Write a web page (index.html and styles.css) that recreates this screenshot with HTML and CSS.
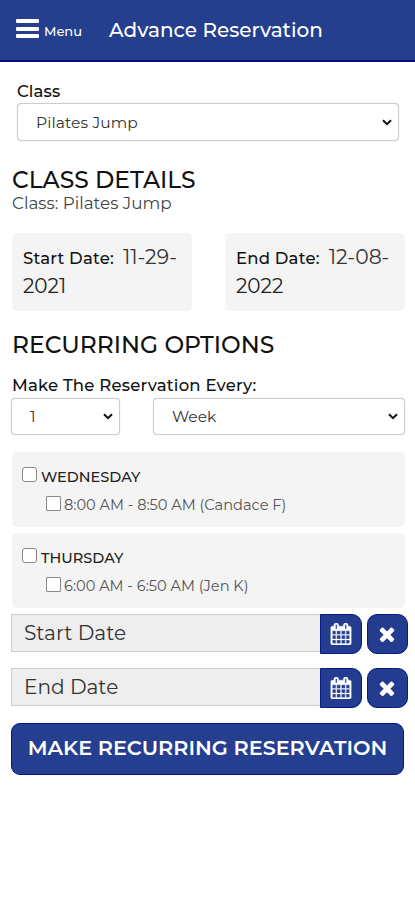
FILE: index.html
```html
<!DOCTYPE html>
<html lang="en">
<head>
<meta charset="utf-8">
<meta name="viewport" content="width=device-width, initial-scale=1">
<title>Advance Reservation</title>
<link rel="stylesheet" href="styles.css">
</head>
<body>
<svg width="0" height="0" class="defs">
  <symbol id="calendar" viewBox="0 0 1792 1792"><path d="M192 1664h288v-288h-288v288zm352 0h320v-288h-320v288zm-352-352h288v-320h-288v320zm352 0h320v-320h-320v320zm-352-384h288v-288h-288v288zm736 736h320v-288h-320v288zm-384-736h320v-288h-320v288zm768 736h288v-288h-288v288zm-384-352h320v-320h-320v320zm-352-864v-288q0-13-9.500-22.500t-22.500-9.500h-64q-13 0-22.500 9.500t-9.500 22.500v288q0 13 9.500 22.500t22.500 9.500h64q13 0 22.500-9.500t9.500-22.500zm736 864h288v-320h-288v320zm-384-384h320v-288h-320v288zm384 0h288v-288h-288v288zm32-480v-288q0-13-9.500-22.500t-22.500-9.500h-64q-13 0-22.500 9.500t-9.500 22.500v288q0 13 9.500 22.500t22.500 9.500h64q13 0 22.500-9.500t9.500-22.500zm384-64v1280q0 52-38 90t-90 38h-1408q-52 0-90-38t-38-90v-1280q0-52 38-90t90-38h128v-96q0-66 47-113t113-47h64q66 0 113 47t47 113v96h384v-96q0-66 47-113t113-47h64q66 0 113 47t47 113v96h128q52 0 90 38t38 90z"/></symbol>
  <symbol id="times" viewBox="0 0 1792 1792"><path d="M1490 1322q0 40-28 68l-136 136q-28 28-68 28t-68-28l-294-294-294 294q-28 28-68 28t-68-28l-136-136q-28-28-28-68t28-68l294-294-294-294q-28-28-28-68t28-68l136-136q28-28 68-28t68 28l294 294 294-294q28-28 68-28t68 28l136 136q28 28 28 68t-28 68l-294 294 294 294q28 28 28 68z"/></symbol>
  <symbol id="chevron" viewBox="0 0 10 7"><path d="M1 1.200l4 4 4-4" fill="none" stroke="#111" stroke-width="2"/></symbol>
</svg>
<header class="topbar">
  <button class="menu"><span class="bars"><i></i><i></i><i></i></span><span class="menu-label">Menu</span></button>
  <h1>Advance Reservation</h1>
</header>
<main>
  <section class="class-field">
    <div class="label class-label">Class</div>
    <div class="select"><span class="class-value">Pilates Jump</span><svg><use href="#chevron"/></svg></div>
  </section>
  <h2 class="details">CLASS DETAILS</h2>
  <p class="class-name">Class: Pilates Jump</p>
  <div class="dates">
    <div class="card date"><div><span class="label">Start Date:</span><span class="value">11-29-</span></div><div class="year">2021</div></div>
    <div class="card date"><div><span class="label">End Date:</span><span class="value">12-08-</span></div><div class="year">2022</div></div>
  </div>
  <h2>RECURRING OPTIONS</h2>
  <div class="label every">Make The Reservation Every:</div>
  <div class="repeat">
    <div class="select"><span>1</span><svg><use href="#chevron"/></svg></div>
    <div class="select"><span>Week</span><svg><use href="#chevron"/></svg></div>
  </div>
  <div class="card day">
    <label class="day-name"><i class="box"></i><span>WEDNESDAY</span></label>
    <label class="slot"><i class="box"></i><span>8:00 AM - 8:50 AM (Candace F)</span></label>
  </div>
  <div class="card day">
    <label class="day-name"><i class="box"></i><span>THURSDAY</span></label>
    <label class="slot"><i class="box"></i><span>6:00 AM - 6:50 AM (Jen K)</span></label>
  </div>
  <div class="picker">
    <div class="input"><span>Start Date</span></div>
    <button class="cal" aria-label="Calendar"><svg><use href="#calendar"/></svg></button>
    <button class="clear" aria-label="Clear"><svg><use href="#times"/></svg></button>
  </div>
  <div class="picker">
    <div class="input"><span>End Date</span></div>
    <button class="cal" aria-label="Calendar"><svg><use href="#calendar"/></svg></button>
    <button class="clear" aria-label="Clear"><svg><use href="#times"/></svg></button>
  </div>
  <button class="submit"><span>MAKE RECURRING RESERVATION</span></button>
</main>
</body>
</html>
```
FILE: styles.css
```css
* { box-sizing: border-box; }
body { margin: 0; background: #fff; color: #222; font-family: Montserrat, Inter, "Open Sans", sans-serif; }
h1, h2, p { margin: 0; }
button { border: 0; padding: 0; font-family: inherit; color: #fff; }
span { white-space: nowrap; }
.defs { display: none; }
.topbar { display: flex; height: 62px; background: #253e8d; border-bottom: 2px solid #060b82; color: #fff; }
.menu { display: flex; width: 109px; padding: 19px 0 0 16px; background: none; }
.bars { display: flex; flex-direction: column; gap: 4px; width: 23px; }
.bars i { height: 4px; border-radius: 1px; background: #fff; }
.bars i + i { margin-top: -0.5px; }
.menu-label { margin: 4px 0 0 5px; font-size: 13px; font-weight: 500; line-height: 16px; }
h1 { font-size: 20px; font-weight: 500; line-height: 24px; padding-top: 18px; white-space: nowrap; }
main { padding: 0 10px 0 11px; }
.label { font-size: 16.500px; font-weight: 500; color: #111; }
.class-field { padding: 19px 6px 0; }
.class-label { line-height: 20px; letter-spacing: 0.1px; margin-bottom: 2px; }
.select { display: flex; align-items: center; justify-content: space-between; height: 37px; padding: 0 6px 0 18px; border: 1px solid #ccc; border-radius: 4px; background: #fff; font-size: 15.500px; color: #333; box-shadow: 0 0 1px #ccc; }
.select svg { width: 10px; height: 7px; }
.class-field .select { height: 38px; }
.class-value { letter-spacing: 0.1px; }
h2 { padding-left: 1px; font-size: 23.400px; font-weight: 500; line-height: 26px; white-space: nowrap; color: #111; }
.details { margin-top: 26px; }
.class-name { padding-left: 1px; font-size: 16.800px; line-height: 21px; color: #444; }
.dates { display: flex; justify-content: space-between; margin: 19px 0 21px 1px; }
.card { background: #f4f4f4; border-radius: 5px; }
.date { width: 180px; height: 78px; padding: 10px 11px; line-height: 28px; white-space: nowrap; }
.date .label { letter-spacing: 0.2px; }
.date .value { margin-left: 9px; font-size: 20.300px; color: #333; }
.year { margin-top: -1px; font-size: 20px; color: #222; }
.every { margin-top: 17px; padding-left: 1px; line-height: 20px; letter-spacing: 0.2px; }
.repeat { display: grid; grid-template-columns: 109px 252px; justify-content: space-between; margin: 3px 0 17px; }
.day { height: 75px; margin: 0 0 6px 1px; padding: 12px 10px; }
.day label { display: flex; align-items: center; }
.box { width: 15px; height: 15px; border: 1px solid #888; border-radius: 3px; background: #fff; margin-right: 4px; flex: none; }
.day-name { height: 25px; font-size: 14.500px; font-weight: 500; }
.day-name .box, .slot .box { transform: translateY(-2px); }
.slot { height: 22px; margin-top: 5px; padding-left: 24px; font-size: 14.600px; color: #555; }
.slot .box { margin-right: 3px; border-radius: 1px; }
.picker { display: flex; height: 40px; margin-bottom: 14px; margin-right: -3px; }
.input { width: 309px; height: 38px; padding-left: 12px; border: 1px solid #ccc; border-right: 0; background: #eee; font-size: 20.100px; line-height: 36px; color: #333; }
.cal, .clear { display: grid; place-items: center; width: 42px; height: 40px; border: 1px solid #0a1a84; border-radius: 10px; background: #233c8f; }
.cal { border-radius: 0 10px 10px 0; }
.clear { width: 41px; margin-left: 5px; }
.clear svg { margin-right: 2px; }
.picker svg { width: 22px; height: 22px; fill: #fff; }
.cal svg { stroke: #fff; stroke-width: 30px; }
.submit { display: block; width: 393px; height: 52px; margin-top: 15px; padding-bottom: 3px; border: 1.500px solid #081480; border-radius: 9px; background: #253e8f; font-size: 20.750px; font-weight: 600; }
```
